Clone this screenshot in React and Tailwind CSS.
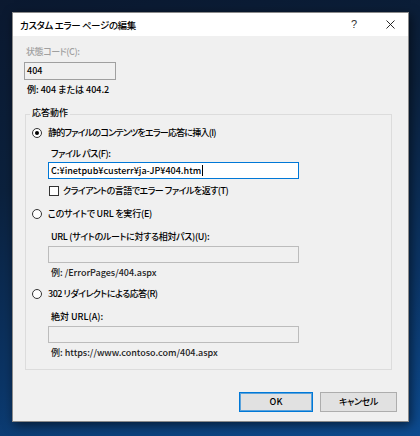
import React from "react";

function Radio({ checked }) {
  return (
    <span className="w-[10px] h-[10px] rounded-full border border-[#333333] bg-white flex items-center justify-center shrink-0">
      {checked && <span className="w-[4px] h-[4px] rounded-full bg-black" />}
    </span>
  );
}

function Row({ children, className = "" }) {
  return <div className={"h-[14px] leading-[14px] flex items-center whitespace-nowrap " + className}>{children}</div>;
}

export default function App() {
  return (
    <div className="w-[420px] h-[436px] overflow-hidden pt-[12px] pl-[12px] bg-[linear-gradient(165deg,#0b1930_0%,#0b213d_35%,#0b3566_70%,#0d4b90_100%)] font-['Noto_Sans_CJK_JP',sans-serif] [font-feature-settings:'palt'] text-[9px] font-medium text-black">
      <div className="w-[397px] h-[410px] border border-[#8a8a8a] bg-[#f0f0f0] flex flex-col shadow-[2px_3px_10px_rgba(0,0,0,0.55)]">
        {/* title bar */}
        <div className="h-[23px] bg-white flex items-center shrink-0">
          <div className="flex-1 pl-[7px] leading-[14px] text-[9.5px] tracking-[-0.4px]">カスタム エラー ページの編集</div>
          <div className="w-[36px] h-full flex items-center justify-center text-[11px] font-normal font-['Liberation_Sans',sans-serif] text-[#333]">?</div>
          <div className="w-[36px] h-full flex items-center justify-center">
            <svg width="9" height="9" viewBox="0 0 9 9">
              <path d="M0.5 0.5 L8.5 8.5 M8.5 0.5 L0.5 8.5" stroke="#111" strokeWidth="0.9" />
            </svg>
          </div>
        </div>

        {/* content */}
        <div className="flex flex-col pl-[11px]">
          <Row className="mt-[9px] ml-[2px] text-[#a0a0a0] tracking-[-0.45px]">状態コード(C):</Row>
          <div className="mt-[3px] w-[92px] h-[18px] border border-[#a0a0a0] bg-[#f0f0f0] flex items-center pl-[2px] leading-[14px]">404</div>
          <Row className="mt-[3px] ml-[3px]">例: 404 または 404.2</Row>

          {/* group box */}
          <div className="relative mt-[17px] ml-[1px] w-[367px] border border-[#dcdcdc] pb-[9px]">
            <span className="absolute top-[-9px] left-[4px] px-[2px] bg-[#f0f0f0] leading-[14px]">応答動作</span>

            <Row className="mt-[11px] pl-[6px] gap-[6px]">
              <Radio checked />
              <span className="tracking-[-0.78px]">静的ファイルのコンテンツをエラー応答に挿入(I)</span>
            </Row>
            <div className="ml-[22px] flex flex-col">
              <Row className="mt-[7px] ml-[3px] tracking-[-0.4px]">ファイル パス(F):</Row>
              <div className="mt-[1px] w-[251px] h-[17px] border border-[#0078d7] bg-white flex items-center pl-[2px] leading-[14px] whitespace-nowrap">
                <span>C:¥inetpub¥custerr¥ja-JP¥404.htm</span>
                <span className="w-[1px] h-[11px] bg-black ml-[1px]" />
              </div>
              <Row className="mt-[5px] ml-[1px] gap-[4px]">
                <span className="w-[10px] h-[10px] border border-[#333333] bg-white shrink-0" />
                <span className="tracking-[-0.52px]">クライアントの言語でエラー ファイルを返す(T)</span>
              </Row>
            </div>

            <Row className="mt-[9px] pl-[6px] gap-[6px]">
              <Radio />
              <span className="tracking-[-0.22px]">このサイトで URL を実行(E)</span>
            </Row>
            <div className="ml-[22px] flex flex-col">
              <Row className="mt-[9px] ml-[3px] tracking-[-0.32px]">URL (サイトのルートに対する相対パス)(U):</Row>
              <div className="mt-[2px] w-[251px] h-[17px] border border-[#bcbcbc] bg-[#f0f0f0]" />
              <Row className="mt-[3px] ml-[3px] text-[#222]">例: /ErrorPages/404.aspx</Row>
            </div>

            <Row className="mt-[7px] pl-[6px] gap-[6px]">
              <Radio />
              <span className="tracking-[-0.5px]">302 リダイレクトによる応答(R)</span>
            </Row>
            <div className="ml-[22px] flex flex-col">
              <Row className="mt-[9px] ml-[3px]">絶対 URL(A):</Row>
              <div className="mt-[2px] w-[251px] h-[17px] border border-[#bcbcbc] bg-[#f0f0f0]" />
              <Row className="mt-[3px] ml-[3px] text-[#222]">例: https://www.contoso.com/404.aspx</Row>
            </div>
          </div>

          {/* buttons */}
          <div className="mt-[22px] flex justify-end pr-[11px] gap-[7px]">
            <div className="w-[74px] h-[20px] border border-[#0078d7] shadow-[inset_0_0_0_1px_rgba(0,120,215,0.6)] bg-[#e1e1e1] flex items-center justify-center leading-[14px]">OK</div>
            <div className="w-[77px] h-[20px] border border-[#adadad] bg-[#e1e1e1] flex items-center justify-center leading-[14px] tracking-[-0.4px]">キャンセル</div>
          </div>
        </div>
      </div>
    </div>
  );
}
